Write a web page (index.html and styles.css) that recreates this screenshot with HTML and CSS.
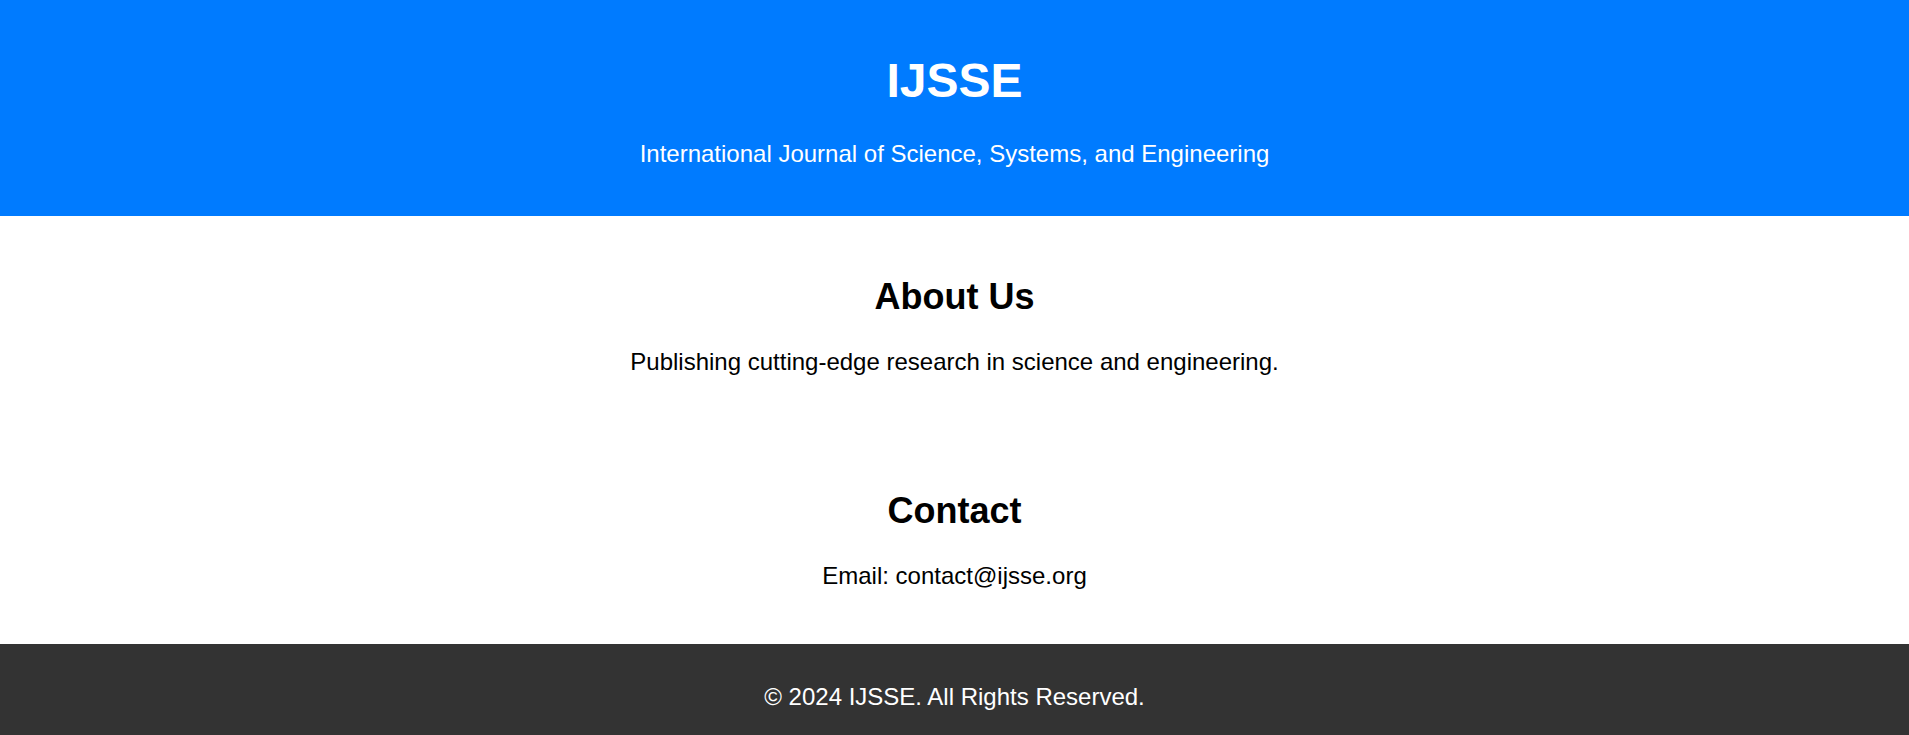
FILE: index.html
```html
<!DOCTYPE html>
<html lang="en">
<head>
<meta charset="utf-8">
<title>IJSSE</title>
<link rel="stylesheet" href="styles.css">
</head>
<body>
<header class="site-header">
  <h1 class="site-title">IJSSE</h1>
  <p class="site-subtitle">International Journal of Science, Systems, and Engineering</p>
</header>
<main>
  <section class="section">
    <h2 class="section-title">About Us</h2>
    <p class="section-text">Publishing cutting-edge research in science and engineering.</p>
  </section>
  <section class="section">
    <h2 class="section-title">Contact</h2>
    <p class="section-text">Email: contact@ijsse.org</p>
  </section>
</main>
<footer class="site-footer">
  <p class="footer-text">&copy; 2024 IJSSE. All Rights Reserved.</p>
</footer>
</body>
</html>
```

FILE: styles.css
```css
html, body {
  margin: 0;
  padding: 0;
}
body {
  font-family: "Liberation Sans", Arial, sans-serif;
  font-size: 24px;
  color: #000;
  background: #fff;
}
.site-header {
  background: #007bff;
  color: #fff;
  text-align: center;
  padding: 21px 0 24px;
}
.site-title {
  font-size: 48px;
  font-weight: bold;
  margin: 32px 0;
}
.site-subtitle {
  margin: 24px 0;
}
.section {
  text-align: center;
  padding: 30px;
}
.section-title {
  font-size: 36px;
  font-weight: bold;
  margin: 30px 0;
}
.section-text {
  margin: 24px 0;
}
.site-footer {
  background: #333;
  color: #fff;
  text-align: center;
  padding: 15px 0;
}
.footer-text {
  margin: 24px 0;
}
```
